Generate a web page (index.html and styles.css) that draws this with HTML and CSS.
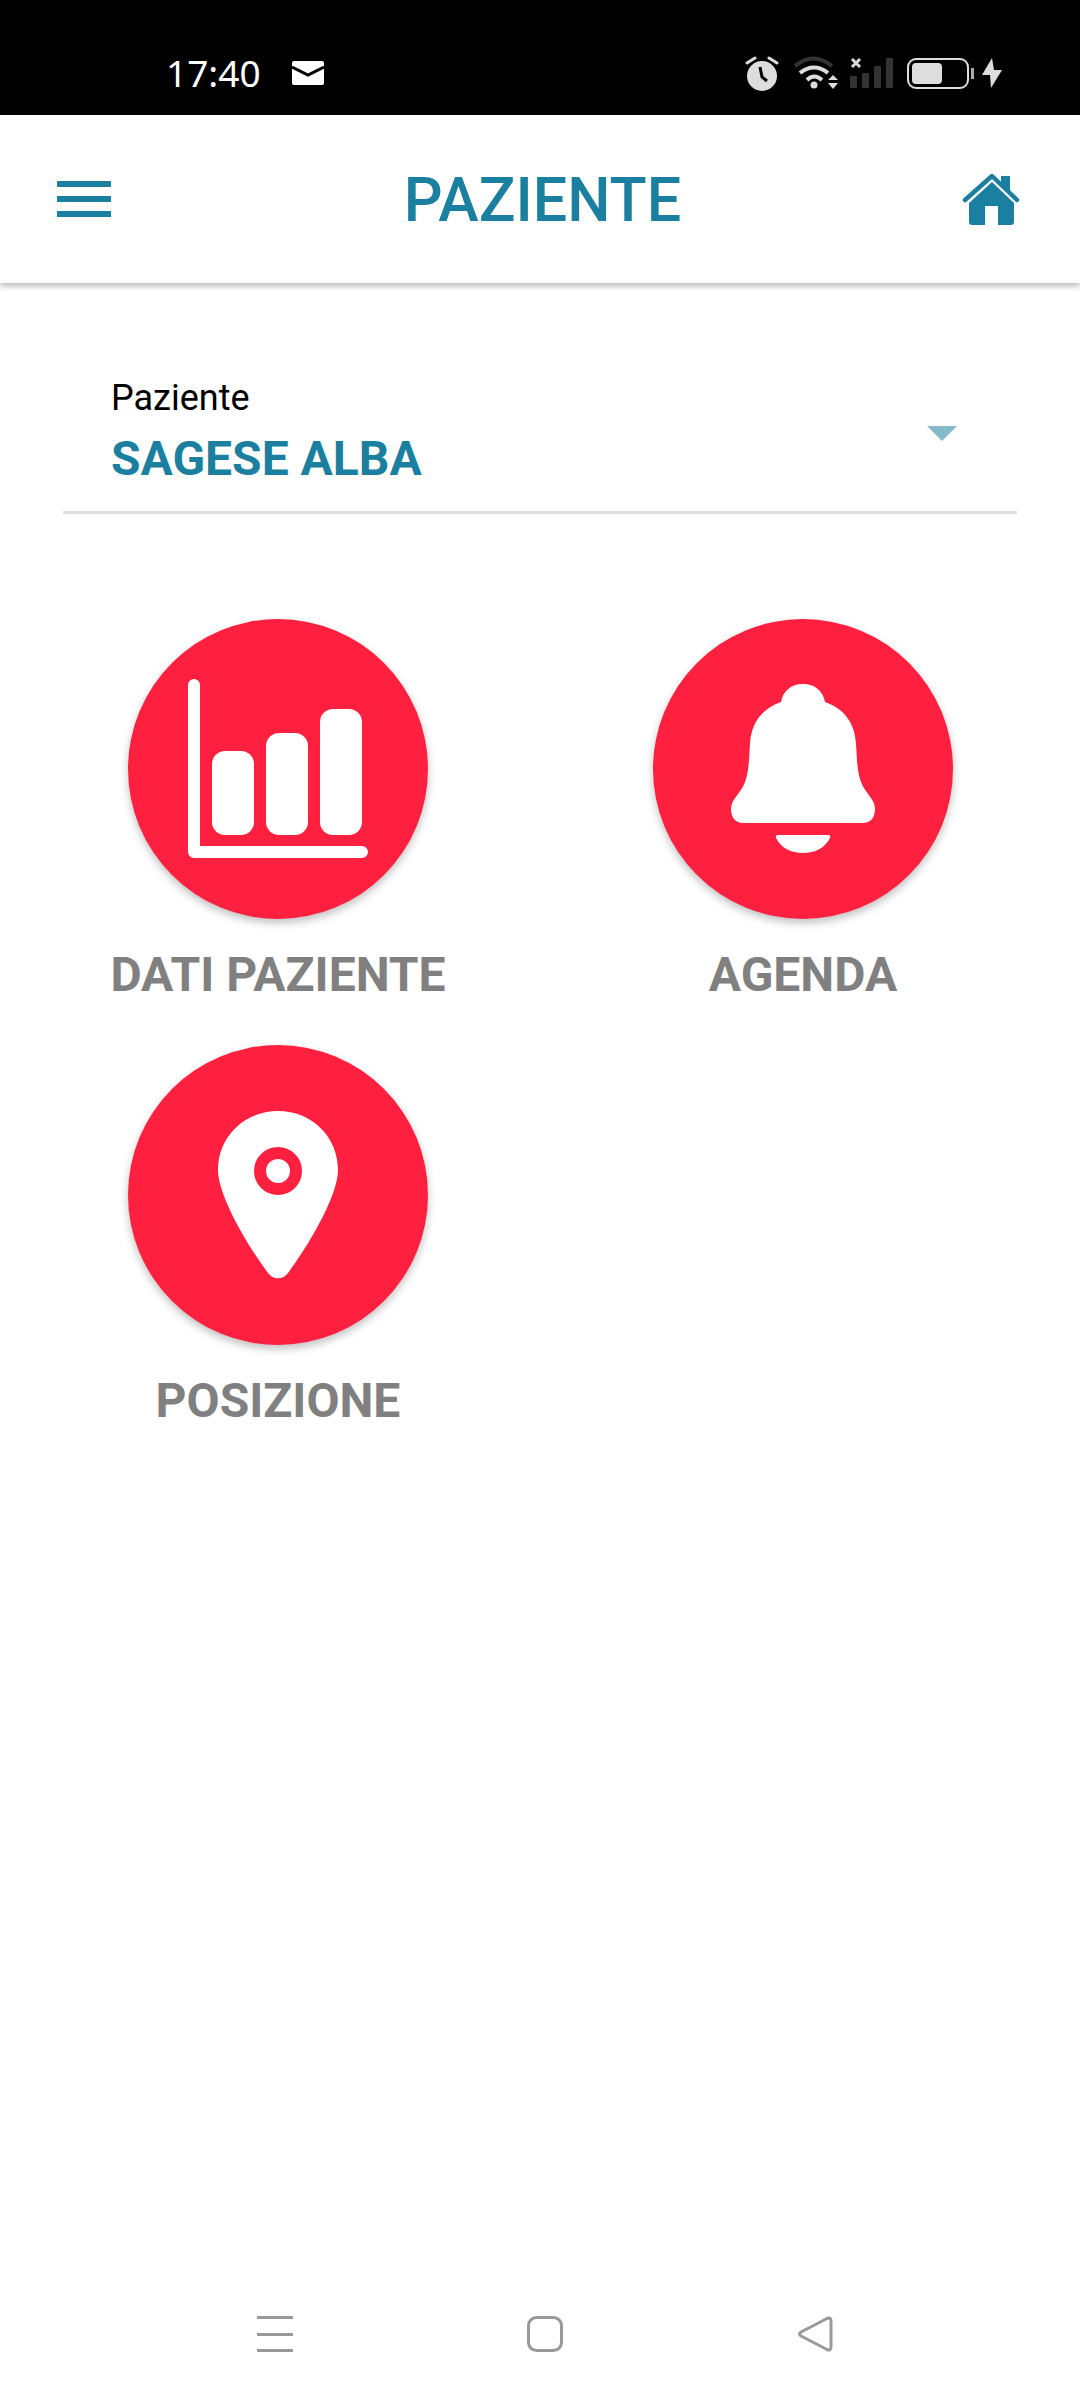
FILE: index.html
```html
<!DOCTYPE html>
<html lang="it">
<head>
  <meta charset="UTF-8" />
  <meta name="viewport" content="width=device-width, initial-scale=1.0" />
  <title>Paziente</title>
  <link rel="stylesheet" href="styles.css">
</head>
<body>
  <div class="page">
    <div class="status-bar">
      <span class="clock">17:40</span>
      <svg class="mail-icon" width="32" height="24" viewBox="0 0 32 24">
        <rect width="32" height="24" rx="2" fill="#fff"/>
        <path d="M0 6 L16 14 L32 6" fill="none" stroke="#000" stroke-width="3"/>
      </svg>
      <div class="status-icons">
        <svg width="47" height="36" viewBox="0 0 47 36">
          <circle cx="17" cy="21" r="15" fill="#ddd"/>
          <path d="M2 8 L10 3 M24 3 L32 8" stroke="#ddd" stroke-width="3" stroke-linecap="round"/>
          <path d="M15 12 L17 22 L22 26" fill="none" stroke="#000" stroke-width="3"/>
        </svg>
        <svg width="58" height="36" viewBox="0 0 58 36">
          <path d="M3 11 Q21 -4 40 11" fill="none" stroke="#333" stroke-width="4"/>
          <path d="M8 18 Q22 7 36 18" fill="none" stroke="#ddd" stroke-width="4"/>
          <path d="M15 25 Q22 18 30 25" fill="none" stroke="#ddd" stroke-width="4"/>
          <circle cx="22" cy="30" r="3.5" fill="#ddd"/>
          <path d="M36 25 L41 20 L46 25Z M36 28 L46 28 L41 34Z" fill="#ddd"/>
        </svg>
        <svg width="57" height="36" viewBox="0 0 57 36">
          <path d="M2 4 L10 12 M10 4 L2 12" stroke="#ddd" stroke-width="3"/>
          <rect x="0" y="21" width="7" height="12" rx="1" fill="#333"/>
          <rect x="12" y="18" width="7" height="15" rx="1" fill="#333"/>
          <rect x="24" y="11" width="7" height="22" rx="1" fill="#333"/>
          <rect x="36" y="3" width="7" height="30" rx="1" fill="#333"/>
        </svg>
        <svg width="75" height="36" viewBox="0 0 75 36">
          <rect x="1" y="4" width="60" height="29" rx="8" fill="none" stroke="#ddd" stroke-width="2"/>
          <rect x="5" y="8" width="30" height="21" rx="4" fill="#ddd"/>
          <rect x="64" y="13" width="3" height="11" fill="#aaa"/>
        </svg>
        <svg width="20" height="36" viewBox="0 0 20 36">
          <path d="M10 3 L0 20 L8 20 L9 33 L20 15 L12 15Z" fill="#ddd"/>
        </svg>
      </div>
    </div>

    <header class="app-bar">
      <div class="menu-icon"><span></span><span></span><span></span></div>
      <h1 class="title">PAZIENTE</h1>
      <svg class="home-icon" width="62" height="58" viewBox="0 0 62 58">
        <path d="M41 6 H50 V22 L41 14Z" fill="#1b7f9f"/>
        <path d="M5 30 L32 6 L57 30" fill="none" stroke="#1b7f9f" stroke-width="4.5" stroke-linecap="round" stroke-linejoin="round"/>
        <path d="M9 33 L32 12 L54 33 V52 Q54 55 51 55 H38 V36 H25 V55 H12 Q9 55 9 52Z" fill="#1b7f9f"/>
      </svg>
    </header>

    <div class="picker">
      <div class="picker-label">Paziente</div>
      <div class="picker-value">SAGESE ALBA</div>
      <span class="picker-arrow"></span>
    </div>

    <div class="tiles">
      <div class="tile">
        <div class="tile-circle">
          <svg width="300" height="300" viewBox="0 0 300 300">
            <path d="M66 66 V233 H234" fill="none" stroke="#fff" stroke-width="12" stroke-linecap="round" stroke-linejoin="round"/>
            <rect x="84" y="132" width="42" height="84" rx="13" fill="#fff"/>
            <rect x="138" y="114" width="42" height="102" rx="13" fill="#fff"/>
            <rect x="192" y="90" width="42" height="126" rx="13" fill="#fff"/>
          </svg>
        </div>
        <div class="tile-label">DATI PAZIENTE</div>
      </div>
      <div class="tile">
        <div class="tile-circle">
          <svg width="300" height="300" viewBox="0 0 300 300">
            <path d="M150 65 C138 65 130 72 128 83 C108 90 98 105 97 125 C96 140 96 152 92 163 C88 174 78 180 78 190 C78 199 83 204 90 204 H210 C217 204 222 199 222 190 C222 180 212 174 208 163 C204 152 204 140 203 125 C202 105 192 90 172 83 C170 72 162 65 150 65Z" fill="#fff"/>
            <path d="M125 216 H175 Q178 216 177 219 C172 229 162 234 150 234 C138 234 128 229 123 219 Q122 216 125 216Z" fill="#fff"/>
          </svg>
        </div>
        <div class="tile-label">AGENDA</div>
      </div>
      <div class="tile">
        <div class="tile-circle">
          <svg width="300" height="300" viewBox="0 0 300 300">
            <path d="M150 66 C116 66 90 92 90 125 C90 152 122 204 140 228 C145 235 155 235 160 228 C178 204 210 152 210 125 C210 92 184 66 150 66Z" fill="#fff"/>
            <circle cx="150" cy="126" r="18" fill="none" stroke="#ff2040" stroke-width="12"/>
          </svg>
        </div>
        <div class="tile-label">POSIZIONE</div>
      </div>
    </div>

    <div class="nav-bar">
      <div class="nav-menu"><span></span><span></span><span></span></div>
      <svg width="36" height="36" viewBox="0 0 36 36">
        <rect x="1.5" y="1.5" width="33" height="33" rx="8" fill="none" stroke="#999" stroke-width="3"/>
      </svg>
      <svg width="36" height="36" viewBox="0 0 36 36">
        <path d="M30 2.5 Q34 1 34 5 V31 Q34 35 30 33.5 L4 20 Q1 18 4 16Z" fill="none" stroke="#999" stroke-width="3" stroke-linejoin="round"/>
      </svg>
    </div>
  </div>
</body>
</html>
```

FILE: styles.css
```css
html, body {
  margin: 0;
  background-color: #fff;
}
.page {
  width: 1080px;
  height: 2400px;
  display: flex;
  flex-direction: column;
  overflow: hidden;
  font-family: Roboto, sans-serif;
}
.status-bar {
  height: 115px;
  flex-shrink: 0;
  background-color: #000;
  display: flex;
  align-items: center;
  padding: 30px 78px 0 166px;
  box-sizing: border-box;
}
.clock {
  color: #fff;
  font-family: "Noto Sans", sans-serif;
  font-size: 37px;
  line-height: 40px;
}
.mail-icon {
  margin-left: 31px;
}
.status-icons {
  margin-left: auto;
  display: flex;
  align-items: flex-start;
}
.app-bar {
  height: 168px;
  flex-shrink: 0;
  background-color: #fff;
  display: flex;
  align-items: center;
  padding: 0 58px 0 57px;
  box-sizing: border-box;
  box-shadow: 0 3px 6px rgba(0, 0, 0, 0.28);
  position: relative;
}
.menu-icon {
  width: 54px;
  display: flex;
  flex-direction: column;
  gap: 9px;
}
.menu-icon span {
  height: 6px;
  background-color: #1b7f9f;
}
.title {
  flex: 1;
  margin: 0;
  padding: 2px 0 0 14px;
  text-align: center;
  color: #1b7f9f;
  font-size: 61px;
  font-weight: 500;
  line-height: 64px;
}
.home-icon {
  flex-shrink: 0;
}
.picker {
  position: relative;
  margin: 0 63px;
  padding: 94px 48px 29px;
  border-bottom: 3px solid #ddd;
}
.picker-label {
  color: #000;
  font-size: 36px;
  line-height: 42px;
}
.picker-value {
  margin-top: 17px;
  color: #1b7f9f;
  font-size: 48px;
  font-weight: 700;
  line-height: 46px;
}
.picker-arrow {
  position: absolute;
  right: 60px;
  top: 143px;
  border-left: 15.5px solid transparent;
  border-right: 15.5px solid transparent;
  border-top: 15px solid #86b9cc;
}
.tiles {
  margin-top: 105px;
  padding: 0 15px;
  display: grid;
  grid-template-columns: 526px 524px;
  row-gap: 42px;
}
.tile {
  display: flex;
  flex-direction: column;
  align-items: center;
}
.tile-circle {
  width: 300px;
  height: 300px;
  border-radius: 50%;
  background-color: #ff2040;
  box-shadow: 0 4px 9px rgba(0, 0, 0, 0.25);
}
.tile-circle svg {
  display: block;
}
.tile-label {
  margin-top: 28px;
  color: #808080;
  font-size: 48px;
  font-weight: 700;
  line-height: 56px;
  white-space: nowrap;
}
.nav-bar {
  margin-top: auto;
  height: 84px;
  flex-shrink: 0;
  box-sizing: border-box;
  display: flex;
  justify-content: space-between;
  align-items: flex-start;
  padding: 0 247px 0 257px;
}
.nav-menu {
  width: 36px;
  height: 36px;
  display: flex;
  flex-direction: column;
  justify-content: space-between;
}
.nav-menu span {
  height: 3px;
  background-color: #999;
}
```
